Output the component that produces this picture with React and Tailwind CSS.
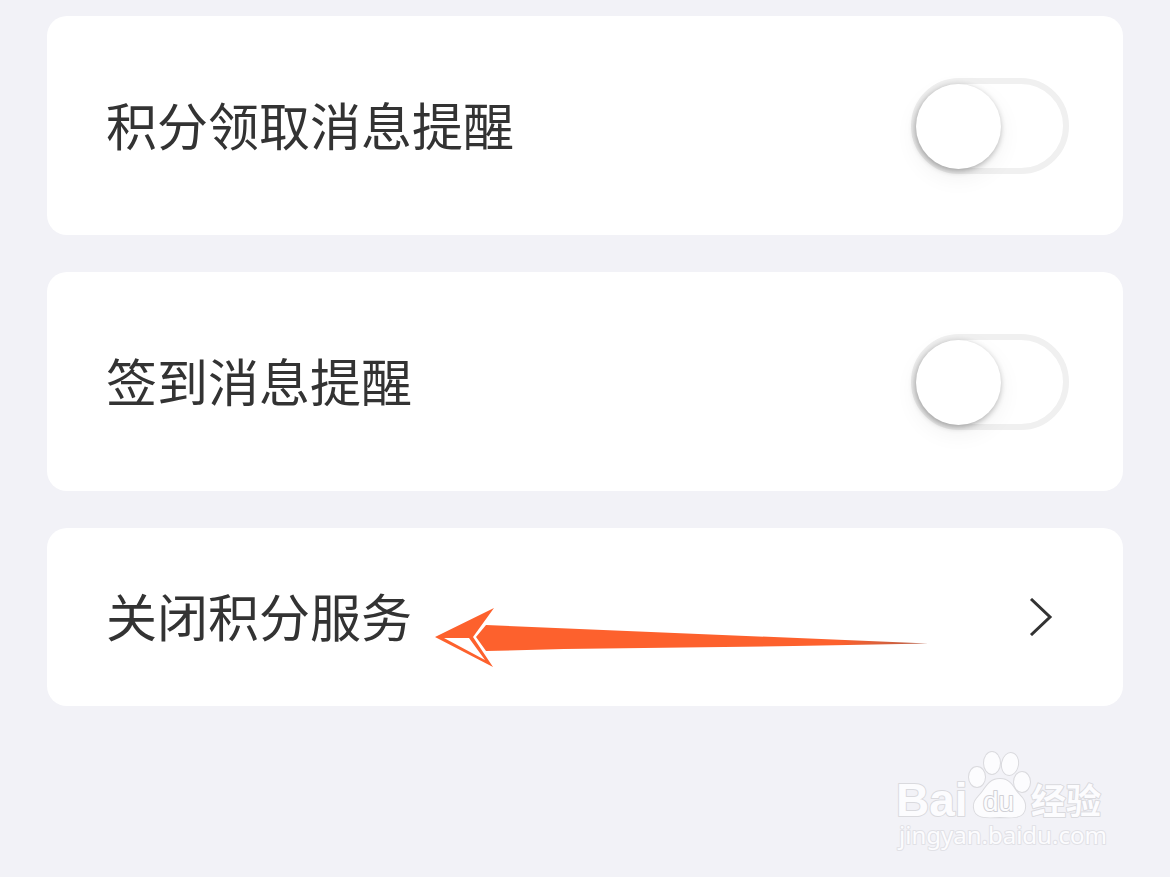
import { useState } from 'react';

const REMINDERS = [
  { id: 'points', label: '积分领取消息提醒' },
  { id: 'checkin', label: '签到消息提醒' },
];

function Switch({ id, checked, onChange }) {
  return (
    <input
      id={id}
      type="checkbox"
      role="switch"
      checked={checked}
      onChange={onChange}
      className="h-24 w-[158px] shrink-0 cursor-pointer appearance-none rounded-full border-[6px] border-[#f0f0f0] bg-white before:-ml-px before:block before:size-[85px] before:rounded-full before:bg-white before:shadow-[-1px_2px_6px_rgba(0,0,0,0.32),0_8px_24px_rgba(0,0,0,0.06)] before:transition-transform checked:border-[#34c759] checked:bg-[#34c759] checked:before:translate-x-[61px]"
    />
  );
}

function ReminderCard({ id, label }) {
  const [enabled, setEnabled] = useState(false);

  return (
    <div className="flex h-[219px] items-center justify-between rounded-[20px] bg-white pr-[54px] pl-[59px]">
      <label htmlFor={id} className="pb-[2px]">
        {label}
      </label>
      <Switch id={id} checked={enabled} onChange={(e) => setEnabled(e.target.checked)} />
    </div>
  );
}

function PointerArrow() {
  return (
    <svg
      viewBox="0 0 496 64"
      className="pointer-events-none absolute top-[77px] left-[387px] w-[496px]"
      aria-hidden="true"
    >
      <defs>
        <linearGradient id="shaft" x1="0" x2="1">
          <stop offset="0.8" stopColor="#fd612d" />
          <stop offset="1" stopColor="#b5604a" />
        </linearGradient>
      </defs>
      <path d="M52 20 L494 38.6 L360 41 L130 44 L52 46 L42 32 Z" fill="url(#shaft)" />
      <path d="M1 32 L60 3 L39 32 L59 62 Z M10 33 L51 55 L35 33 Z" fill="#fd612d" fillRule="evenodd" />
    </svg>
  );
}

function Watermark() {
  return (
    <svg
      viewBox="0 0 216 104"
      className="w-[216px]"
      fill="#fcfcfe"
      stroke="#dadade"
      strokeWidth="2"
      strokeLinejoin="round"
      paintOrder="stroke"
      role="img"
      aria-label="Baidu 经验"
    >
      <text x="1" y="68" fontSize="46" fontWeight="700" fontFamily="Liberation Sans, sans-serif">
        Bai
      </text>
      <g>
        <ellipse cx="82" cy="29" rx="8" ry="10" />
        <ellipse cx="97" cy="15" rx="8" ry="11" />
        <ellipse cx="115" cy="16" rx="8" ry="11" transform="rotate(10 115 16)" />
        <ellipse cx="127" cy="34" rx="8" ry="10" />
        <path d="M105 31 C114 31 117 37 121 43 C126 49 131 52 130 60 C129 70 119 70 105 69 C90 70 80 70 79 60 C78 52 84 49 88 43 C93 36 96 31 105 31 Z" />
      </g>
      <text x="88" y="63" fontSize="28" fontFamily="Liberation Sans, sans-serif" stroke="#d0d0d5">
        du
      </text>
      <text x="136" y="66" fontSize="35" fontWeight="700" fontFamily="Noto Sans CJK SC, sans-serif">
        经验
      </text>
      <text x="4" y="96" fontSize="24" fontFamily="Noto Sans, sans-serif" stroke="#e1e1e6">
        jingyan.baidu.com
      </text>
    </svg>
  );
}

export default function App() {
  return (
    <div className="min-h-screen bg-[#f2f2f7] px-[47px] pt-4 font-['Noto_Sans_CJK_SC',sans-serif] text-[51px] leading-none text-[#333]">
      <main className="flex flex-col gap-[37px]">
        {REMINDERS.map((item) => (
          <ReminderCard key={item.id} id={item.id} label={item.label} />
        ))}

        <div className="relative">
          <button
            type="button"
            className="flex h-[178px] w-full cursor-pointer items-center justify-between rounded-[20px] bg-white pr-[70px] pl-[59px]"
          >
            <span className="pb-1">关闭积分服务</span>
            <svg
              viewBox="0 0 24 38"
              className="w-6"
              fill="none"
              stroke="#333"
              strokeWidth="3"
              aria-hidden="true"
            >
              <path d="M2 1 L21 19 L2 37" />
            </svg>
          </button>
          <PointerArrow />
        </div>
      </main>

      <footer className="flex justify-end pt-[42px] pr-3">
        <Watermark />
      </footer>
    </div>
  );
}
